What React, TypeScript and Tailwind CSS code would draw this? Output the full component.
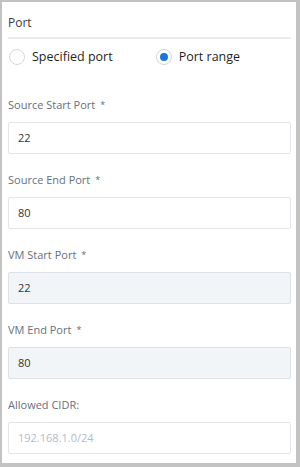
const fields = [
  { label: "Source Start Port", required: true, value: "22", disabled: false },
  { label: "Source End Port", required: true, value: "80", disabled: false },
  { label: "VM Start Port", required: true, value: "22", disabled: true },
  { label: "VM End Port", required: true, value: "80", disabled: true },
  { label: "Allowed CIDR:", required: false, value: "", placeholder: "192.168.1.0/24", disabled: false },
];

const Radio = ({ checked, label }: { checked: boolean; label: string }) => (
  <label className="flex items-center gap-[7px]">
    <span
      className={[
        "flex h-[16px] w-[16px] items-center justify-center rounded-full border bg-white",
        checked ? "border-[#cdd5df]" : "border-[#d3d8de]",
      ].join(" ")}
    >
      {checked && <span className="h-[8px] w-[8px] rounded-full bg-[#1a76dc]" />}
    </span>
    <span className="text-[12.5px] leading-[18px] text-[#1f1f1f]">{label}</span>
  </label>
);

export default function App() {
  return (
    <div className="h-[467px] w-[300px] bg-[#c3c3c3] pb-[4px] pl-[2px] pr-[4px] pt-[2px] font-['Open_Sans',sans-serif]">
      <div className="h-full bg-white pl-[6px] pr-[5px]">
        {/* section title */}
        <div className="pb-[5px] pt-[12px] text-[12px] leading-[18px] text-[#3a3a3a]">Port</div>
        <div className="h-[2px] bg-[#e8ebef]" />

        {/* port mode */}
        <div className="flex h-[36px] items-center pl-[1px]">
          <Radio checked={false} label="Specified port" />
          <div className="ml-[43px]">
            <Radio checked label="Port range" />
          </div>
        </div>

        <div className="mt-[20px]">
          {fields.map((f, i) => (
            <div key={i} className="mb-[16px]">
              <div className="mb-[7px] flex h-[20px] items-center text-[11px] text-[#66707c]">
                {f.label}
                {f.required && <span className="ml-[5px] text-[9px] text-[#5d6b80]">*</span>}
              </div>
              <div
                className={[
                  "flex h-[32px] items-center rounded-[2px] border px-[9px] text-[11px]",
                  f.disabled ? "border-[#dde2e8] bg-[#f2f5f8]" : "border-[#e2e6eb] bg-white",
                  f.value ? "text-[#333333]" : "text-[#b4bcc6]",
                ].join(" ")}
              >
                {f.value || f.placeholder}
              </div>
            </div>
          ))}
        </div>
      </div>
    </div>
  );
}
